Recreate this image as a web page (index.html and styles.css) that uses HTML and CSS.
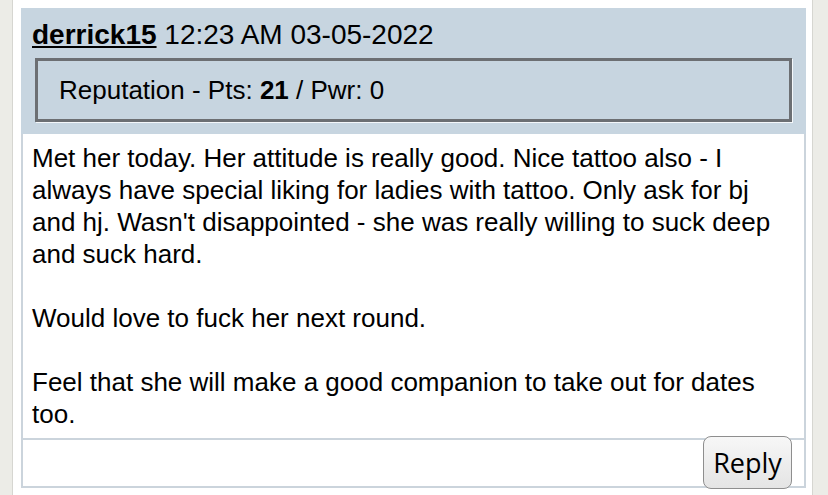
FILE: index.html
```html
<!DOCTYPE html>
<html lang="en">
<head>
    <meta charset="UTF-8">
    <meta name="viewport" content="width=device-width, initial-scale=1.0">
    <title>derrick15 - post</title>
    <link rel="stylesheet" href="styles.css">
</head>
<body>
    <div id="page">
        <div class="post">
            <div class="post-head">
                <div class="post-meta">
                    <a class="post-author" href="#">derrick15</a> 12:23 AM 03-05-2022
                </div>
                <div class="post-rep">
                    Reputation - Pts: <b>21</b> / Pwr: 0
                </div>
            </div>
            <div class="post-body">
                Met her today. Her attitude is really good. Nice tattoo also - I always have special liking for ladies with tattoo. Only ask for bj and hj. Wasn't disappointed - she was really willing to suck deep and suck hard.<br><br>
                Would love to fuck her next round.<br><br>
                Feel that she will make a good companion to take out for dates too.
            </div>
            <div class="post-foot">
                <button class="reply-button">Reply</button>
            </div>
        </div>
    </div>
</body>
</html>
```

FILE: styles.css
```css
body {
    font-family: 'Liberation Sans', Arial, sans-serif;
    background: #ecece7;
    color: #000;
    margin: 0;
}

#page {
    margin-left: 12px;
    width: 801px;
    height: 495px;
    background: #fff;
    border-left: 1px solid #d6d6d1;
    border-right: 1px solid #d6d6d1;
    padding: 8px 8px 0 8px;
    box-sizing: border-box;
}

.post {
    width: 785px;
}

.post-head {
    background: #c7d5e0;
    padding: 11px 14px 12px 11px;
}

.post-meta {
    font-size: 28px;
    line-height: 32px;
    margin-bottom: 7px;
}

.post-author {
    color: #000;
    font-weight: bold;
    text-decoration: underline;
}

.post-rep {
    margin-left: 3px;
    border: 3px solid #6c6f73;
    box-shadow: 1px 1px 0 #f4f7fa;
    padding: 13px 21px;
    font-size: 26px;
    line-height: 32px;
}

.post-body {
    background: #fff;
    border-left: 2px solid #cbd4dc;
    border-right: 2px solid #cbd4dc;
    padding: 8px 24px 8px 9px;
    font-size: 26px;
    line-height: 32px;
}

.post-foot {
    height: 46px;
    border: 2px solid #cbd4dc;
    display: flex;
    justify-content: flex-end;
    align-items: center;
    padding-right: 12px;
}

.reply-button {
    height: 53px;
    width: 89px;
    margin-top: -2px;
    border: 1px solid #8e8e8e;
    border-radius: 8px;
    background: linear-gradient(#f7f7f7, #e4e4e4);
    font-family: 'Open Sans', sans-serif;
    font-size: 27px;
    color: #000;
    padding: 0;
}
```
